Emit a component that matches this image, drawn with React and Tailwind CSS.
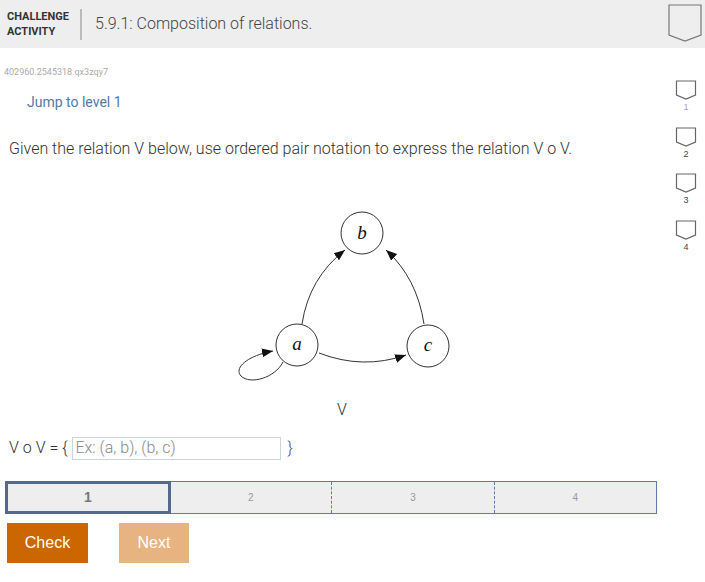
import React from 'react'

function Badge({ big }) {
  if (big) {
    return (
      <svg width="35" height="40" viewBox="0 0 35 40" className="block">
        <path d="M1 1 H33 V31 L17 37 L1 31 Z" fill="none" stroke="#777" strokeWidth="1.2" />
      </svg>
    )
  }
  return (
    <svg width="22" height="21" viewBox="0 0 22 21" className="block">
      <path d="M1.5 1 H20.5 V15 L11 19 L1.5 15 Z" fill="none" stroke="#666" strokeWidth="1.2" />
    </svg>
  )
}

function Graph() {
  return (
    <svg width="260" height="200" viewBox="0 0 260 200" className="block ml-[225px]">
      <defs>
        <marker id="arr" viewBox="0 0 10 10" refX="10" refY="5" markerWidth="11" markerHeight="11" markerUnits="userSpaceOnUse" orient="auto">
          <path d="M0 1 L10 5 L0 9 Z" fill="#111" />
        </marker>
      </defs>
      <g fill="none" stroke="#333" strokeWidth="1">
        <path d="M77 124 Q84 78 120 50" markerEnd="url(#arr)" />
        <path d="M199 124 Q192 78 161 50" markerEnd="url(#arr)" />
        <path d="M94 153 Q138 170 181 155" markerEnd="url(#arr)" />
        <path d="M58 162 C50 178 25 185 16 176 C8 167 25 155 48 151" markerEnd="url(#arr)" />
        <circle cx="137" cy="33" r="21" />
        <circle cx="72" cy="145" r="21" />
        <circle cx="203" cy="146" r="21" />
      </g>
      <g fontFamily="'Liberation Serif', serif" fontStyle="italic" fontSize="19" fill="#111" textAnchor="middle">
        <text x="137" y="39">b</text>
        <text x="72" y="150">a</text>
        <text x="203" y="151">c</text>
      </g>
    </svg>
  )
}

export default function App() {
  const levels = [1, 2, 3, 4]
  return (
    <div className="w-[705px] h-[582px] bg-white text-[#333] font-['Roboto',sans-serif] overflow-hidden">
      <div className="h-12 bg-[#eeeeee] flex items-center">
        <div className="pl-[7px] w-[80px] text-[11px] font-bold leading-[15px] text-[#333]">
          CHALLENGE<br />ACTIVITY
        </div>
        <div className="h-[31px] border-l-2 border-[#bbb]"></div>
        <div className="pl-[13px] text-[16px] font-light text-[#444] flex-1">5.9.1: Composition of relations.</div>
        <div className="pr-[2px]">
          <Badge big />
        </div>
      </div>

      <div className="flex">
        <div className="flex-1">
          <div className="pl-1 pt-[18px] text-[9px] text-[#aaa] leading-[12px]">402960.2545318.qx3zqy7</div>
          <div className="pl-[27px] pt-[14px] text-[14px] text-[#4f7aa8] leading-5">Jump to level 1</div>
          <div className="pl-[9px] pt-[27px] text-[16px] font-light leading-5 text-[#333]">
            Given the relation V below, use ordered pair notation to express the relation V o V.
          </div>
          <div className="pt-[41px]">
            <Graph />
          </div>
          <div className="pl-[337px] text-[16px] font-light leading-5">V</div>
          <div className="flex items-center pl-[9px] pt-[16px] text-[16px] font-light">
            <span>V o V = {'{'}</span>
            <input
              className="ml-[5px] w-[209px] h-[23px] border border-[#ccd5d8] px-[2px] text-[16px] font-light outline-none placeholder:text-[#888]"
              placeholder="Ex: (a, b), (b, c)"
            />
            <span className="ml-[6px] text-[#6b3a6b]">{'}'}</span>
          </div>
          <div className="ml-[5px] mt-[21px] w-[652px] h-[33px] border border-[#5b7da6] bg-[#eeeeee] flex font-['Liberation_Sans',sans-serif]">
            {levels.map(n =>
              n === 1 ? (
                <div key={n} className="w-[166px] -m-px border-[3px] border-[#556a8b] flex items-center justify-center text-[14px] font-bold text-[#777]">
                  1
                </div>
              ) : (
                <div key={n} className={'flex-1 flex items-center justify-center text-[10px] text-[#999] ' + (n > 2 ? 'border-l border-dashed border-[#5b7da6]' : '')}>
                  {n}
                </div>
              )
            )}
          </div>
          <div className="flex pl-[7px] pt-[9px] gap-[31px] font-['Liberation_Sans',sans-serif]">
            <button className="w-[81px] h-10 bg-[#cc6600] text-white text-[16px]">Check</button>
            <button className="w-[70px] h-10 bg-[#e6b381] text-white text-[16px]">Next</button>
          </div>
        </div>
        <div className="w-[38px] pt-[32px] flex flex-col items-center">
          {levels.map(n => (
            <div key={n} className="flex flex-col items-center h-[46.5px]">
              <Badge />
              <div className={'text-[9px] leading-[11px] mt-[1px] font-["Liberation_Sans",sans-serif] ' + (n === 1 ? 'text-[#9aa0e0]' : 'text-[#444]')}>{n}</div>
            </div>
          ))}
        </div>
      </div>
    </div>
  )
}
